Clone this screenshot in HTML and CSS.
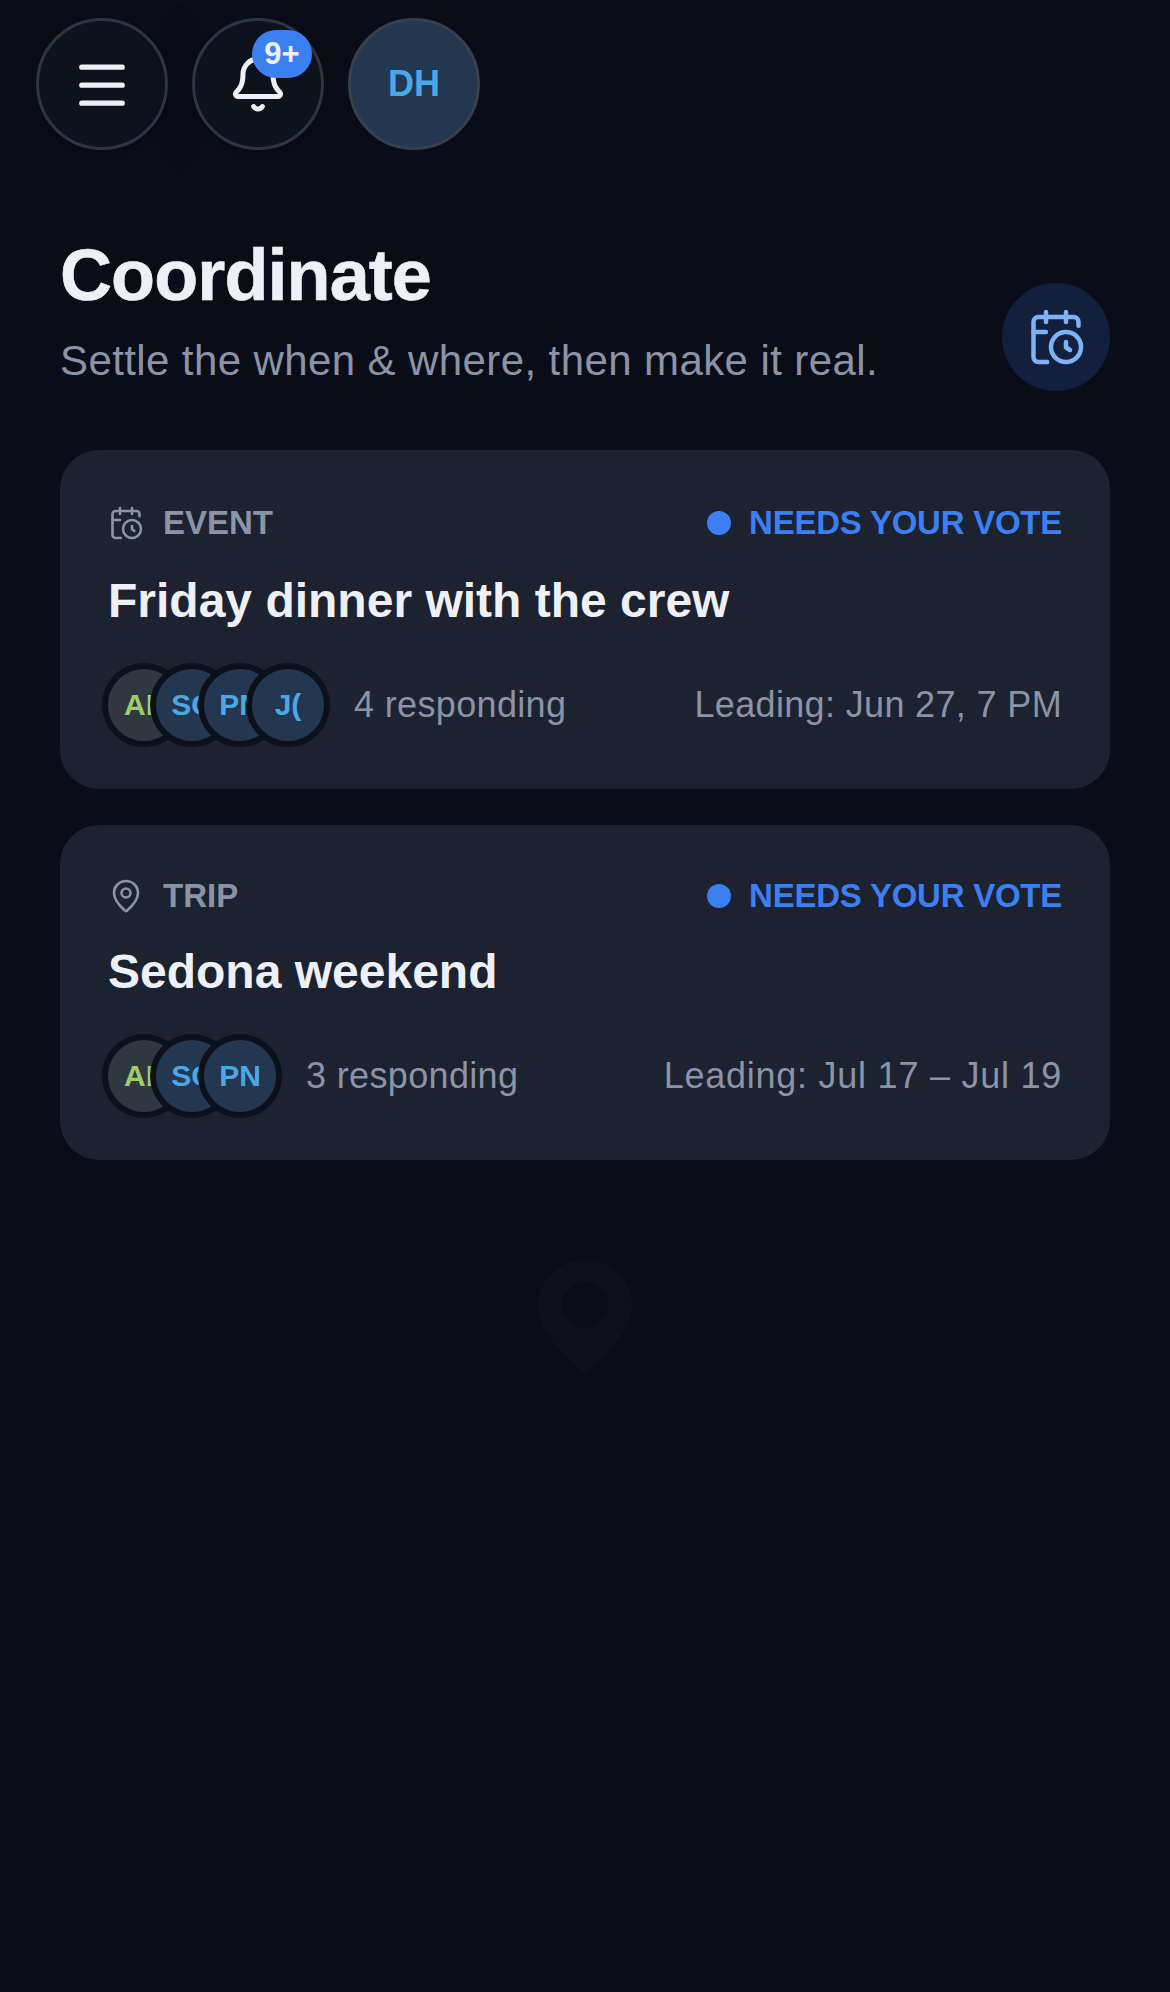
FILE: index.html
```html
<!DOCTYPE html>
<html>
  <head>
    <link rel="stylesheet" href="styles.css">
  </head>
  <body>
    <div class="top-bar">
      <div class="round-btn">
        <svg width="54" height="54" viewBox="0 0 24 24" fill="none" stroke="#eef0f6" stroke-width="2.3" stroke-linecap="round"><path d="M3 4.500h18M3 12.500h18M3 20.500h18"/></svg>
      </div>
      <div class="round-btn">
        <svg width="60" height="60" viewBox="0 0 24 24" fill="none" stroke="#eef0f6" stroke-width="2" stroke-linecap="round" stroke-linejoin="round"><path d="M10.268 21a2 2 0 0 0 3.464 0"/><path d="M3.262 15.326A1 1 0 0 0 4 17h16a1 1 0 0 0 .74-1.673C19.41 13.956 18 12.499 18 8A6 6 0 0 0 6 8c0 4.499-1.411 5.956-2.738 7.326"/></svg>
        <span class="badge">9+</span>
      </div>
      <div class="round-btn me">DH</div>
    </div>

    <div class="heading">
      <div>
        <h1>Coordinate</h1>
        <p class="sub">Settle the when &amp; where, then make it real.</p>
      </div>
      <div class="new-btn">
        <svg width="60" height="60" viewBox="0 0 24 24" fill="none" stroke="#7fb2f5" stroke-width="1.8" stroke-linecap="round" stroke-linejoin="round"><path d="M16 14v2.2l1.600 1"/><path d="M16 2v4"/><path d="M21 7.500V6a2 2 0 0 0-2-2H5a2 2 0 0 0-2 2v14a2 2 0 0 0 2 2h3.500"/><path d="M3 10h5"/><path d="M8 2v4"/><circle cx="16" cy="16" r="6"/></svg>
      </div>
    </div>

    <div class="card">
      <div class="card-top">
        <div class="kind">
          <svg width="36" height="42" viewBox="0 0 24 24" fill="none" stroke="#8b93a7" stroke-width="1.75" stroke-linecap="round" stroke-linejoin="round"><path d="M16 14v2.2l1.600 1"/><path d="M16 2v4"/><path d="M21 7.500V6a2 2 0 0 0-2-2H5a2 2 0 0 0-2 2v14a2 2 0 0 0 2 2h3.500"/><path d="M3 10h5"/><path d="M8 2v4"/><circle cx="16" cy="16" r="6"/></svg>
          <span>EVENT</span>
        </div>
        <div class="status"><i class="dot"></i>NEEDS YOUR VOTE</div>
      </div>
      <div class="card-title">Friday dinner with the crew</div>
      <div class="card-bottom">
        <div class="people">
          <div class="avatars">
            <div class="avatar green"><span>AL</span></div>
            <div class="avatar"><span>SC</span></div>
            <div class="avatar"><span>PN</span></div>
            <div class="avatar"><span>J(</span></div>
          </div>
          <span class="meta">4 responding</span>
        </div>
        <span class="meta">Leading: Jun 27, 7 PM</span>
      </div>
    </div>

    <div class="card">
      <div class="card-top">
        <div class="kind">
          <svg width="36" height="36" viewBox="0 0 24 24" fill="none" stroke="#8b93a7" stroke-width="1.75" stroke-linecap="round" stroke-linejoin="round"><path d="M20 10c0 4.993-5.539 10.193-7.399 11.799a1 1 0 0 1-1.202 0C9.539 20.193 4 14.993 4 10a8 8 0 0 1 16 0"/><circle cx="12" cy="10" r="3"/></svg>
          <span>TRIP</span>
        </div>
        <div class="status"><i class="dot"></i>NEEDS YOUR VOTE</div>
      </div>
      <div class="card-title">Sedona weekend</div>
      <div class="card-bottom">
        <div class="people">
          <div class="avatars">
            <div class="avatar green"><span>AL</span></div>
            <div class="avatar"><span>SC</span></div>
            <div class="avatar"><span>PN</span></div>
          </div>
          <span class="meta">3 responding</span>
        </div>
        <span class="meta dates">Leading: Jul 17 – Jul 19</span>
      </div>
    </div>

    <div class="empty-pin">
      <svg width="96" height="114" viewBox="0 0 96 114"><path fill-rule="evenodd" fill="#0e111a" d="M48 0c26 0 47 21 47 45 0 26-27 52-47 69C28 97 1 71 1 45 1 21 22 0 48 0zm0 22a23 23 0 1 0 0 46 23 23 0 0 0 0-46z"/></svg>
    </div>
  </body>
</html>
```
FILE: styles.css
```css
html, body {
  margin: 0;
  padding: 0;
}
body {
  width: 1170px;
  height: 1992px;
  overflow: hidden;
  background: #0a0d18;
  font-family: "Liberation Sans", Arial, sans-serif;
  color: #eef0f6;
}
.top-bar {
  display: flex;
  gap: 24px;
  padding: 18px 0 0 36px;
}
.round-btn {
  position: relative;
  width: 132px;
  height: 132px;
  box-sizing: border-box;
  border-radius: 50%;
  border: 3px solid #2f3540;
  background: #0e121d;
  box-shadow: 0 6px 48px rgba(0, 0, 0, .25);
  display: flex;
  align-items: center;
  justify-content: center;
}
.me {
  background: #243750;
  border-color: #363f4c;
  box-shadow: none;
  color: #4aa8e6;
  font-size: 36px;
  font-weight: 700;
}
.badge {
  position: absolute;
  top: 9px;
  left: 57px;
  width: 60px;
  height: 48px;
  border-radius: 24px;
  background: #3b7ff0;
  color: #eef0f6;
  font-size: 31px;
  font-weight: 700;
  display: flex;
  align-items: center;
  justify-content: center;
}
.heading {
  display: flex;
  justify-content: space-between;
  align-items: flex-end;
  padding: 83px 60px 59px;
}
h1 {
  margin: 0;
  font-size: 72px;
  font-weight: 700;
  letter-spacing: -.9px;
  line-height: 84px;
  -webkit-text-stroke: .6px #eef0f6;
}
.sub {
  margin: 18px 0 4px;
  font-size: 42px;
  letter-spacing: .4px;
  line-height: 52px;
  color: #8b93a7;
}
.new-btn {
  width: 108px;
  height: 108px;
  border-radius: 50%;
  background: #12203d;
  display: flex;
  align-items: center;
  justify-content: center;
}
.card {
  margin: 0 60px 36px;
  padding: 52px 48px 42px;
  border-radius: 39px;
  background: #1c2230;
}
.card-top, .card-bottom, .kind, .people, .status {
  display: flex;
  align-items: center;
}
.card-top, .card-bottom {
  justify-content: space-between;
}
.kind {
  gap: 19px;
  font-size: 33px;
  font-weight: 700;
  color: #8b93a7;
}
.status {
  font-size: 33px;
  font-weight: 700;
  letter-spacing: -.25px;
  color: #3b7ff0;
}
.dot {
  width: 24px;
  height: 24px;
  border-radius: 50%;
  background: #3b7ff0;
  margin-right: 18px;
}
.card-title {
  margin: 27px 0 32px;
  font-size: 48px;
  font-weight: 700;
  line-height: 60px;
}
.people {
  gap: 24px;
}
.avatars {
  display: flex;
}
.avatar {
  width: 84px;
  height: 84px;
  box-sizing: border-box;
  border-radius: 50%;
  border: 6px solid #0c101b;
  background: #243750;
  color: #4aa8e6;
  font-size: 30px;
  font-weight: 700;
  display: flex;
  align-items: center;
  justify-content: center;
  margin-left: -36px;
  overflow: hidden;
}
.avatar:first-child {
  margin-left: -6px;
}
.green {
  background: #2f3740;
  color: #9ccf6a;
}
.meta {
  font-size: 36px;
  letter-spacing: .35px;
  color: #8b93a7;
}
.dates {
  letter-spacing: .75px;
}
.empty-pin {
  display: flex;
  justify-content: center;
  margin-top: 100px;
}
```
